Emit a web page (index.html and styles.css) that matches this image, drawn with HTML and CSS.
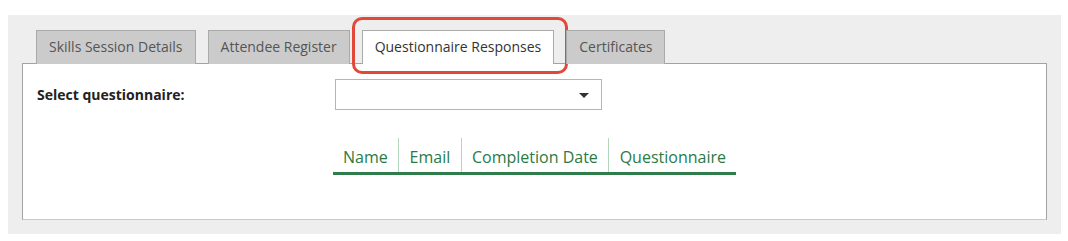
FILE: index.html
```html
<!DOCTYPE html>
<html lang="en">

<head>
    <meta charset="UTF-8">
    <title>Skills Session</title>
    <link rel="stylesheet" href="styles.css">
</head>

<body>
    <div class="session-box">
        <ul class="tabs">
            <li class="tab">Skills Session Details</li>
            <li class="tab">Attendee Register</li>
            <li class="tab active">
                Questionnaire Responses
                <span class="highlight"></span>
            </li>
            <li class="tab">Certificates</li>
        </ul>

        <div class="panel">
            <div class="form-row">
                <label class="form-label" for="questionnaire">Select questionnaire:</label>
                <div class="select-box" id="questionnaire">
                    <span class="select-arrow"></span>
                </div>
            </div>

            <table class="responses">
                <thead>
                    <tr>
                        <th>Name</th>
                        <th>Email</th>
                        <th>Completion Date</th>
                        <th>Questionnaire</th>
                    </tr>
                </thead>
            </table>
        </div>
    </div>
</body>

</html>
```

FILE: styles.css
```css
/* Reset styles */
* {
    margin: 0;
    padding: 0;
    box-sizing: border-box;
}

body {
    font-family: "Open Sans", "Liberation Sans", sans-serif;
    background-color: #fff;
    color: #222;
}

/* Outer grey box */
.session-box {
    background-color: #eeeeee;
    margin: 15px 7px 8px 8px;
    padding: 15px 14px 14px 14px;
}

/* Tabs */
.tabs {
    list-style: none;
    display: flex;
    gap: 12px;
    padding-left: 14px;
    position: relative;
    z-index: 1;
}

.tab {
    position: relative;
    height: 34px;
    padding: 0 12px;
    font-size: 14px;
    line-height: 32px;
    color: #555;
    background-color: #cbcbcb;
    border: 1px solid #aaa;
    border-bottom: none;
}

.tab.active {
    background-color: #fff;
    color: #333;
}

/* Red box drawn over the active tab */
.highlight {
    position: absolute;
    top: -14px;
    left: -11px;
    right: -15px;
    bottom: -10px;
    border: 3px solid #e2483a;
    border-radius: 10px;
}

/* Panel */
.panel {
    background-color: #fff;
    border: 1px solid #a3a3a3;
    border-bottom-color: #c8c8c8;
    margin-top: -1px;
    height: 157px;
    padding: 15px 14px 0 14px;
}

.form-row {
    display: flex;
    align-items: center;
}

.form-label {
    width: 298px;
    font-size: 14px;
    font-weight: bold;
    color: #222;
}

.select-box {
    position: relative;
    width: 267px;
    height: 31px;
    border: 1px solid #b5b5b5;
    background-color: #fff;
}

.select-arrow {
    position: absolute;
    right: 12px;
    top: 13px;
    width: 0;
    height: 0;
    border-left: 5px solid transparent;
    border-right: 5px solid transparent;
    border-top: 5px solid #333;
}

/* Responses table */
.responses {
    margin: 28px auto 0 auto;
    border-collapse: collapse;
    border-bottom: 3px solid #2e7d4a;
}

.responses th {
    font-weight: normal;
    font-size: 16px;
    color: #2b7a45;
    height: 35px;
    padding: 4px 10.4px 0 10.4px;
    border-left: 1px solid #b3d6bd;
}

.responses th:first-child {
    border-left: none;
}
```
